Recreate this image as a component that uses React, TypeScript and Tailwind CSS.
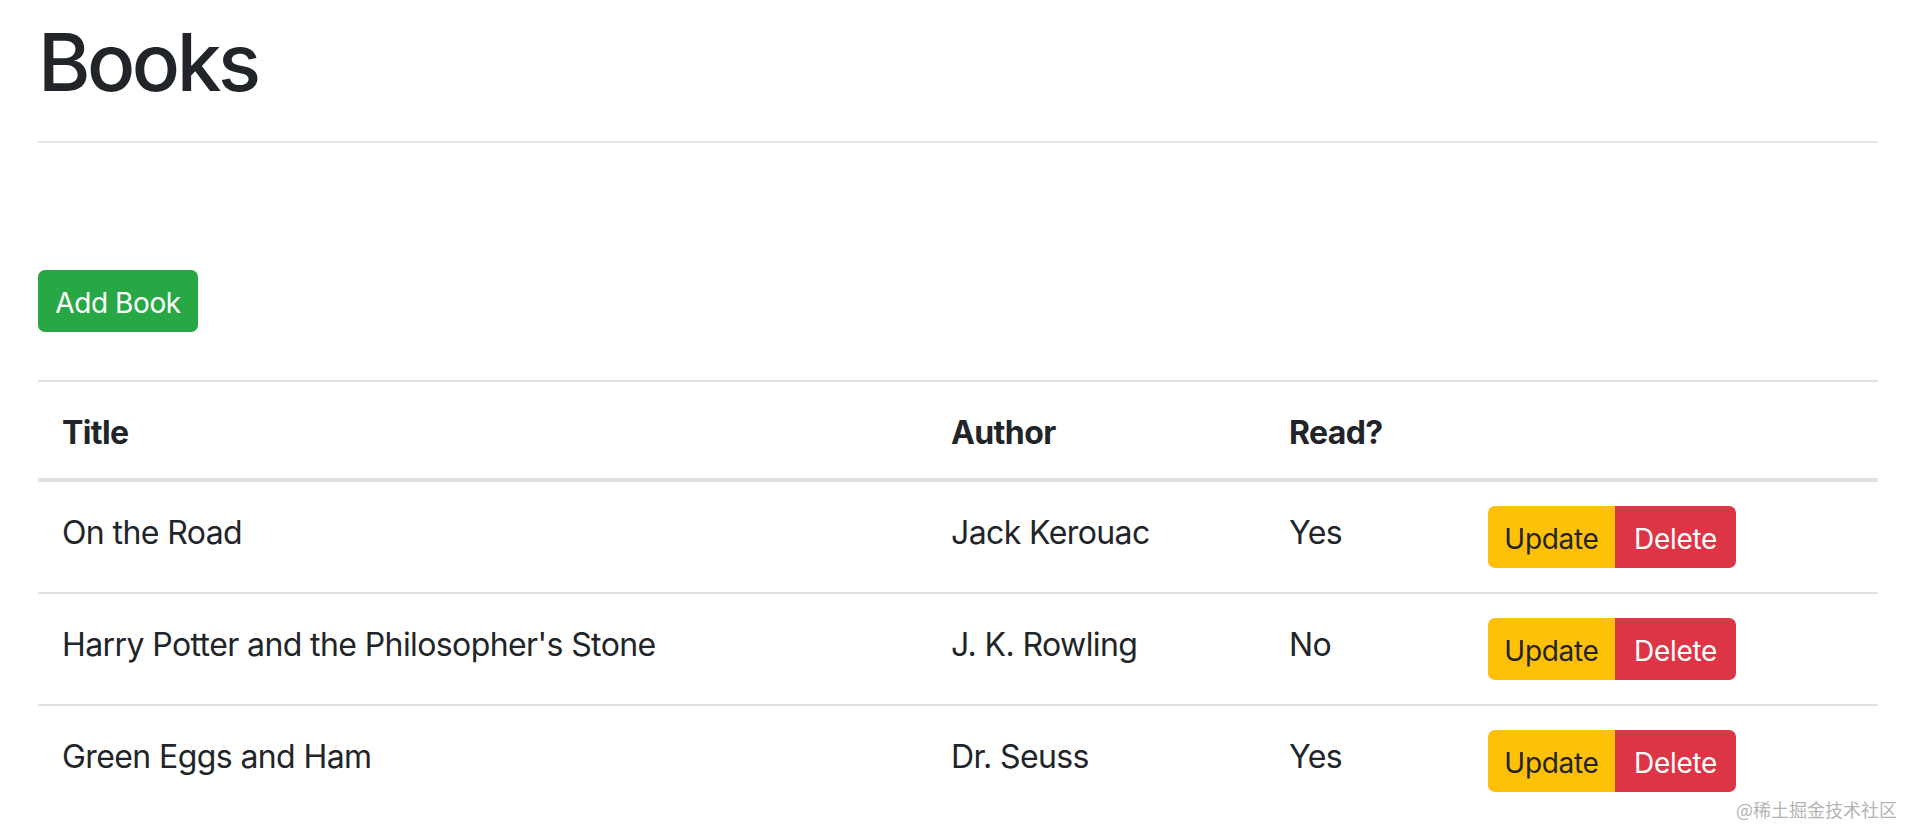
import React from 'react';

type Book = {
    title: string;
    author: string;
    read: boolean;
};

const books: Book[] = [
    { title: 'On the Road', author: 'Jack Kerouac', read: true },
    { title: "Harry Potter and the Philosopher's Stone", author: 'J. K. Rowling', read: false },
    { title: 'Green Eggs and Ham', author: 'Dr. Seuss', read: true },
];

const App: React.FC = () => {
    return (
        <div
            className="relative min-h-screen bg-white text-[#212529]"
            style={{ fontFamily: 'Inter, "Noto Sans", sans-serif' }}
        >
            <div className="w-[1840px] ml-[38px] pt-[14px]">
                <h1 className="text-[80px] leading-[96px] font-medium tracking-[-3.5px]">Books</h1>
                <hr className="mt-[31px] border-0 h-[2px] bg-[#e6e6e6]" />

                <button
                    type="button"
                    className="mt-[127px] w-[160px] h-[62px] pt-[3px] rounded-[7px] bg-[#28a745] text-white text-[28px] leading-none tracking-[-0.4px]"
                >
                    Add Book
                </button>

                {/* books table */}
                <table className="mt-[48px] w-full border-collapse text-[32px] leading-[48px] tracking-[-0.6px]">
                    <thead>
                        <tr className="border-t-2 border-b-4 border-[#dee2e6]">
                            <th className="w-[889px] px-[24px] pt-[27px] pb-[21px] text-left font-bold">Title</th>
                            <th className="w-[338px] px-[24px] pt-[27px] pb-[21px] text-left font-bold">Author</th>
                            <th className="w-[199px] px-[24px] pt-[27px] pb-[21px] text-left font-bold">Read?</th>
                            <th className="px-[24px] pt-[27px] pb-[21px]"></th>
                        </tr>
                    </thead>
                    <tbody>
                        {books.map((book, index) => (
                            <tr
                                key={index}
                                className={index < books.length - 1 ? 'border-b-2 border-[#dee2e6]' : ''}
                            >
                                <td className="px-[24px] pt-[27px] pb-[21px] align-top">{book.title}</td>
                                <td className="px-[24px] pt-[27px] pb-[21px] align-top">{book.author}</td>
                                <td className="px-[24px] pt-[27px] pb-[21px] align-top">{book.read ? 'Yes' : 'No'}</td>
                                <td className="p-[24px] align-top">
                                    <div className="flex tracking-[-0.3px]">
                                        <button
                                            type="button"
                                            className="w-[127px] h-[62px] pt-[3px] rounded-l-[7px] bg-[#ffc107] text-[#212529] text-[28px] leading-none"
                                        >
                                            Update
                                        </button>
                                        <button
                                            type="button"
                                            className="w-[121px] h-[62px] pt-[3px] rounded-r-[7px] bg-[#dc3545] text-white text-[28px] leading-none"
                                        >
                                            Delete
                                        </button>
                                    </div>
                                </td>
                            </tr>
                        ))}
                    </tbody>
                </table>
            </div>

            <div
                className="absolute right-[9px] bottom-[8px] text-[18px] leading-none text-[#b4b4b4]"
                style={{ fontFamily: '"Noto Sans CJK SC", sans-serif' }}
            >
                @稀土掘金技术社区
            </div>
        </div>
    );
};

export default App;
